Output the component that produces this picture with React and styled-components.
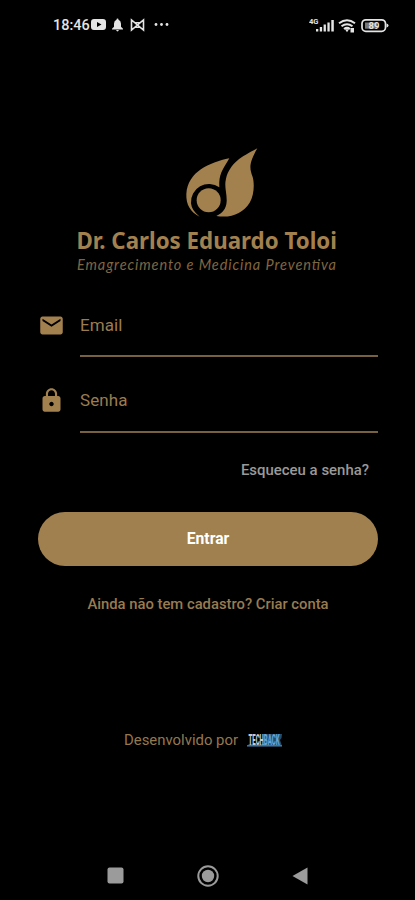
import React from "react";
import styled, { createGlobalStyle } from "styled-components";

const GOLD = "#a3814f";

const GlobalStyle = createGlobalStyle`
  * { box-sizing: border-box; }
  body { margin: 0; background: #000; }
`;

const Screen = styled.div`
  width: 415px;
  height: 900px;
  background: #000;
  font-family: Roboto, sans-serif;
  display: flex;
  flex-direction: column;
  overflow: hidden;
`;

const StatusBar = styled.header`
  height: 48px;
  padding: 1px 26px 0 53px;
  display: flex;
  align-items: center;
  justify-content: space-between;
  color: #e4e4e4;
`;

const StatusGroup = styled.div`
  display: flex;
  align-items: center;
  height: 20px;
`;

const Clock = styled.span`
  width: 38px;
  font-size: 14.5px;
  font-weight: 500;
  line-height: 20px;
  padding-top: 2px;
  white-space: nowrap;
`;

const Brand = styled.div`
  margin-top: 97px;
  height: 132px;
  display: flex;
  justify-content: center;
`;

const Form = styled.form`
  padding: 23px 37px 0 38px;
  display: flex;
  flex-direction: column;
`;

const Field = styled.label`
  height: ${(p) => p.$height}px;
  display: flex;
  align-items: flex-start;
`;

const FieldIcon = styled.svg`
  width: 27px;
  height: 27px;
  margin: ${(p) => p.$top}px 15px 0 0;
  fill: ${GOLD};
`;

const FieldLine = styled.span`
  flex: 1;
  height: 100%;
  padding-top: ${(p) => p.$top}px;
  border-bottom: 2px solid #776140;
  color: #9a7c50;
  font-size: 17px;
  line-height: 24px;
  letter-spacing: 0.1px;
`;

const TextLink = styled.a`
  align-self: ${(p) => p.$align || "center"};
  margin: ${(p) => p.$margin};
  color: ${(p) => p.$color};
  font-size: ${(p) => p.$size}px;
  font-weight: 500;
  line-height: 20px;
  white-space: nowrap;
`;

const SubmitButton = styled.button`
  height: 54px;
  margin-top: 32px;
  padding: 0;
  border: 0;
  border-radius: 27px;
  background: #a0804f;
  color: #fff;
  font: 700 15.7px/54px Roboto, sans-serif;
`;

const Credit = styled.div`
  margin-top: 116px;
  padding-left: 124px;
  height: 20px;
  display: flex;
  align-items: center;
  gap: 8px;
  color: #94784f;
  font-size: 14.9px;
  line-height: 20px;
  white-space: nowrap;
`;

const CreditText = styled.span`
  width: 115px;
`;

const NavBar = styled.nav`
  margin-top: auto;
  height: 49px;
  padding: 0 99px 0 107px;
  display: flex;
  align-items: center;
  justify-content: space-between;
  color: #9b9b9b;
`;

function StatusIcons() {
  return (
    <svg width="80" height="16" viewBox="91 17 80 16" fill="currentColor">
      <path fillRule="evenodd" d="M94 19h9q3 0 3 3v5q0 3-3 3h-9q-3 0-3-3v-5q0-3 3-3zm3 3v5l4.500-2.500z" />
      <path d="M117.500 18.500q1 0 1 1.200 2.500 1 2.500 4v3l2 2v.8h-11v-.8l2-2v-3q0-3 2.500-4 0-1.200 1-1.200zM116.200 30h2.600q-.2 1.400-1.300 1.400T116.200 30z" />
      <path d="M131.500 30V20l3.500 2.800h5l3.500-2.800v10l-3.500-2.800h-5zM131.500 20l6 5 6-5M131.500 30l6-5 6 5" fill="none" stroke="currentColor" strokeWidth="1.600" />
      <circle cx="156" cy="24.500" r="1.400" />
      <circle cx="161.500" cy="24.500" r="1.400" />
      <circle cx="167" cy="24.500" r="1.400" />
    </svg>
  );
}

function SystemIcons() {
  return (
    <svg width="80" height="20" viewBox="309 14 80 20" fill="currentColor">
      <text x="309" y="23" fontFamily="Roboto, sans-serif" fontSize="8" fontWeight="700" textLength="9.500" lengthAdjust="spacingAndGlyphs">4G</text>
      <path d="M316 28h2.300v2.500H316zM319.800 26h2.300v4.500h-2.300zM323.600 23.500h2.300v7h-2.300zM327.400 21.500h2.300v9h-2.300zM331.300 19h2.500v11.500h-2.500z" />
      <g fill="none" stroke="currentColor" strokeWidth="2">
        <path d="M339 22.300q8-6 16 0M341.500 25.300q5.500-4 11 0M344 28q3-2.300 6 0" />
      </g>
      <path d="M345 28.200h4l-2 3zM350.500 27h3.500v4.500h-3.500z" />
      <rect x="362" y="18.800" width="23.500" height="11.500" rx="3.800" fill="none" stroke="currentColor" strokeWidth="1.700" />
      <path d="M386.500 22.500q2 .5 2 2t-2 2z" />
      <rect x="365" y="21.500" width="12" height="6.200" fill="#777" />
      <text x="368.500" y="28" fontFamily="Roboto, sans-serif" fontSize="9.500" fontWeight="700">89</text>
    </svg>
  );
}

function BrandLogo() {
  return (
    <svg width="265" height="132" viewBox="75 145 265 132" fill={GOLD}>
      <g transform="translate(170 140) scale(.33333)">
        <path d="M178 55C157 92 146 102 148 142A54 54 0 0 0 63 190Q65 212 89 230C61 216 48 194 49 162C54 94 118 68 178 55Z" />
        <circle cx="116" cy="181" r="36" />
        <path d="M262 25C235 72 239 86 248 111C254 132 252 168 239 188C218 220 185 235 139 228C158 219 169 207 170 184C171 158 162 140 168 116C181 67 217 49 262 25Z" />
      </g>
      <text x="76.500" y="249" fontFamily="'Noto Sans', sans-serif" fontSize="22.500" fontWeight="700" textLength="260.500" lengthAdjust="spacingAndGlyphs">Dr. Carlos Eduardo Toloi</text>
      <text x="77" y="269.500" fontFamily="Lato, sans-serif" fontSize="14.500" fontStyle="italic" fill="#806640" textLength="259" lengthAdjust="spacing">Emagrecimento e Medicina Preventiva</text>
    </svg>
  );
}

function TechBackLogo() {
  return (
    <svg width="36" height="20" viewBox="0 -2 36 20" fontFamily="Roboto, sans-serif" fontSize="14" fontWeight="900">
      <path d="M17 2h18l-.5 4-1.500 2 2 6H0l2-2h15z" fill="#234d6e" />
      <text transform="translate(1.500 12.700) scale(.43 1)" fill="#c4c9cd">
        TECH<tspan fill="#67a3d3">BACK</tspan>
      </text>
      <path d="M0 13.200h35v1.200H0z" fill="#4b86b3" />
    </svg>
  );
}

export default function App() {
  return (
    <>
      <GlobalStyle />
      <Screen>
        <StatusBar>
          <StatusGroup>
            <Clock>18:46</Clock>
            <StatusIcons />
          </StatusGroup>
          <StatusGroup>
            <SystemIcons />
          </StatusGroup>
        </StatusBar>
        <Brand>
          <BrandLogo />
        </Brand>
        <Form>
          <Field $height={57}>
            <FieldIcon viewBox="0 0 24 24" $top={12}>
              <path d="M20 4H4c-1.100 0-2 .9-2 2v12c0 1.100.9 2 2 2h16c1.100 0 2-.9 2-2V6c0-1.100-.9-2-2-2zm0 4-8 5-8-5V6l8 5 8-5z" />
            </FieldIcon>
            <FieldLine $top={13}>Email</FieldLine>
          </Field>
          <Field $height={76}>
            <FieldIcon viewBox="0 0 24 24" $top={30}>
              <path d="M18 8h-1V6c0-2.760-2.240-5-5-5S7 3.240 7 6v2H6c-1.100 0-2 .9-2 2v10c0 1.100.9 2 2 2h12c1.100 0 2-.9 2-2V10c0-1.100-.9-2-2-2zm-6 9c-1.100 0-2-.9-2-2s.9-2 2-2 2 .9 2 2-.9 2-2 2zm3.100-9H8.900V6c0-1.710 1.390-3.100 3.100-3.100s3.100 1.390 3.100 3.100z" />
            </FieldIcon>
            <FieldLine $top={31}>Senha</FieldLine>
          </Field>
          <TextLink $align="flex-end" $margin="27px 9px 0 0" $color="#999" $size={14.95}>Esqueceu a senha?</TextLink>
          <SubmitButton type="button">Entrar</SubmitButton>
          <TextLink $margin="28px 0 0" $color="#987b50" $size={14.8}>Ainda não tem cadastro? Criar conta</TextLink>
        </Form>
        <Credit>
          <CreditText>Desenvolvido por</CreditText>
          <TechBackLogo />
        </Credit>
        <NavBar>
          <svg width="17" height="17" fill="currentColor"><rect x=".5" y=".5" width="16" height="16" rx="2" /></svg>
          <svg width="24" height="24" fill="currentColor">
            <circle cx="12" cy="12" r="9.700" fill="none" stroke="currentColor" strokeWidth="2" />
            <circle cx="12" cy="12" r="6.200" />
          </svg>
          <svg width="24" height="20" fill="currentColor"><path d="M15.500 1.500v17L.5 10z" /></svg>
        </NavBar>
      </Screen>
    </>
  );
}
